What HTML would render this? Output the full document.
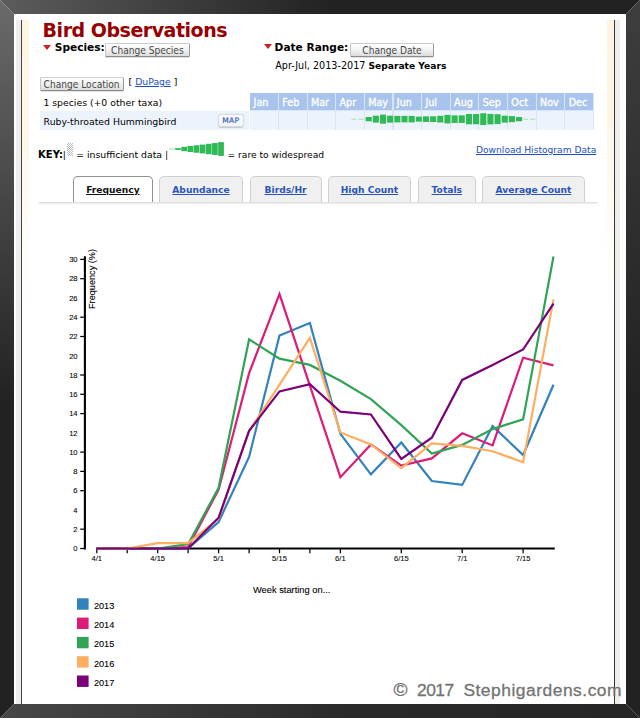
<!DOCTYPE html>
<html lang="en">
<head>
<meta charset="utf-8">
<title>Bird Observations</title>
<style>
html,body{margin:0;padding:0;}
body{width:640px;height:718px;position:relative;overflow:hidden;background:#fff;font-family:"DejaVu Sans","Liberation Sans",sans-serif;color:#000;}
.frame{position:absolute;left:0;top:0;width:640px;height:718px;}
.ft{position:absolute;left:0;top:0;width:640px;height:14px;background:linear-gradient(90deg,#5c5c5c 0,#222 52%,#222 100%);clip-path:polygon(0 0,640px 0,626px 14px,14px 14px);}
.fb{position:absolute;left:0;top:704px;width:640px;height:14px;background:linear-gradient(90deg,#474747 0,#2a2a2a 55%,#262626 100%);clip-path:polygon(14px 0,626px 0,640px 14px,0 14px);}
.fl{position:absolute;left:0;top:0;width:14px;height:718px;background:linear-gradient(180deg,#6a6a6a 0,#222 56%,#222 100%);clip-path:polygon(0 0,14px 14px,14px 704px,0 718px);}
.fr{position:absolute;left:626px;top:0;width:14px;height:718px;background:linear-gradient(180deg,#3e3e3e 0,#222 56%,#222 100%);clip-path:polygon(14px 0,14px 718px,0 704px,0 14px);}
.sl,.sr{position:absolute;top:20px;height:684px;}
.sl{left:16px;width:13px;background:linear-gradient(90deg,#eeeeee 0,#eeeeee 5px,#444 5px,#444 6.2px,transparent 6.2px);}
.sl:before{content:"";position:absolute;left:6.2px;top:0;width:6.8px;height:300px;background:linear-gradient(180deg,#fdf4e2 0,#fdf6e8 35%,#fffdf8 75%,#fff 100%);}
.sr{left:607.5px;width:13px;background:linear-gradient(90deg,transparent 0,transparent 6.3px,#333 6.3px,#333 7.5px,#eeeeee 7.5px,#eeeeee 12.5px,transparent 12.5px);}
.sr:before{content:"";position:absolute;left:-0.8px;top:0;width:7.1px;height:300px;background:linear-gradient(180deg,#fdf4e2 0,#fdf6e8 35%,#fffdf8 75%,#fff 100%);}
.t{position:absolute;white-space:nowrap;line-height:20px;height:20px;}
h1.t{margin:0;font-size:19px;font-weight:bold;color:#990000;left:42.6px;top:17.1px;line-height:26px;height:26px;letter-spacing:-0.48px;transform:scaleY(1.045);transform-origin:0 19.6px;}
.tri{position:absolute;width:0;height:0;border-left:4.1px solid transparent;border-right:4.1px solid transparent;border-top:5.2px solid #cc2222;}
.b1{font-weight:bold;font-size:10.6px;}
.n1{font-size:9.3px;}
.btn{position:absolute;box-sizing:border-box;height:13.8px;border:1px solid #cccccc;border-left-color:#c4c4c4;border-bottom-color:#8c8c8c;border-right-color:#9a9a9a;border-radius:1.5px;background:linear-gradient(180deg,#ffffff 0,#f1f1f1 50%,#dcdcdc 100%);font-family:"DejaVu Sans Condensed","Liberation Sans",sans-serif;font-size:10.1px;line-height:13.8px;text-align:center;color:#484848;white-space:nowrap;box-shadow:0 0.5px 0.5px rgba(0,0,0,.25);}
a{color:#1a4fbf;text-decoration:underline;}
.mh{position:absolute;top:93.4px;height:16.6px;background:#a9c4ec;color:#fff;font-size:9.6px;line-height:19.4px;box-sizing:border-box;padding-left:3.3px;overflow:hidden;-webkit-text-stroke:0.3px #fff;}
.mc{position:absolute;top:110.6px;height:19.1px;background:#edf3fc;}
.rowbg{position:absolute;left:40px;top:110.6px;width:209.4px;height:19.1px;background:#edf3fc;}
.hbg{position:absolute;left:250.3px;top:93.4px;width:343.5px;height:36.3px;background:#d9e5f7;}
.b{position:absolute;width:6.2px;background:#2fba55;display:block;}
.b.t{background:#a6dfb2;}
.map{position:absolute;left:217.6px;top:113.7px;width:26px;height:13.2px;box-sizing:border-box;border:1px solid #d6d9e0;border-radius:3.5px;background:linear-gradient(180deg,#fbfcfe,#f1f4f9);font-size:7.6px;letter-spacing:0.3px;padding-left:0.6px;line-height:12.4px;text-align:center;color:#3f60c0;-webkit-text-stroke:0.2px #3f60c0;box-shadow:0 0.6px 1px rgba(0,0,0,.18);}
.chk{position:absolute;left:67px;top:142.5px;width:6px;height:13px;background-color:#fff;background-image:linear-gradient(45deg,#bbb 25%,transparent 25%,transparent 75%,#bbb 75%),linear-gradient(45deg,#bbb 25%,transparent 25%,transparent 75%,#bbb 75%);background-size:2px 2px;background-position:0 0,1px 1px;}
.tabs{position:absolute;left:38.6px;top:201.5px;width:558px;height:3px;background:linear-gradient(180deg,#d6d6d6 0,#ececec 40%,rgba(255,255,255,0) 100%);}
.tab{position:absolute;top:175.9px;height:26.4px;box-sizing:border-box;border:1px solid #d0d0d0;border-bottom:none;border-radius:5px 5px 0 0;background:#f0f0f0;text-align:center;font-size:9.15px;font-weight:bold;line-height:27px;white-space:nowrap;}
.tab a{color:#2a55b8;}
.tab.on{background:#fff;border-color:#909090;height:26.4px;}
.tab.on a{color:#111;}
.chart{position:absolute;left:0;top:0;}
.chart .hist rect{fill:#2fba55;}
.chart .hist rect.bt{fill:#a6dfb2;}
.chart text{font-family:"Liberation Sans",sans-serif;fill:#000;stroke:#000;stroke-width:0.1px;}
.chart .ticklab text{font-size:7.6px;fill:#000;stroke-width:0.08px;}
.chart .axlab{font-size:9.6px;}
.chart .leg{font-size:9.2px;}
.wm{position:absolute;left:0;top:0;font-family:"Liberation Sans",sans-serif;font-size:17.4px;line-height:24px;color:#737373;white-space:nowrap;-webkit-text-stroke:0.3px #737373;}
.wm span{position:absolute;top:678.2px;}
</style>
</head>
<body>
<div class="sl"></div><div class="sr"></div>

<h1 class="t">Bird Observations</h1>

<div class="tri" style="left:43.4px;top:44.6px"></div>
<span class="t b1" style="left:54.8px;top:37px">Species:</span>
<div class="btn" style="left:105.2px;top:43.3px;width:84.4px">Change Species</div>

<div class="tri" style="left:263.5px;top:44.4px"></div>
<span class="t b1" style="left:274.6px;top:37px">Date Range:</span>
<div class="btn" style="left:349.6px;top:43.3px;width:84.8px">Change Date</div>
<span class="t n1" style="left:275.2px;top:55.5px;font-size:9.65px">Apr-Jul, 2013-2017 <b style="font-size:9.15px">Separate Years</b></span>

<div class="btn" style="left:39.6px;top:77.2px;width:84px">Change Location</div>
<span class="t n1" style="left:128.6px;top:72.2px">[ <a>DuPage</a> ]</span>

<span class="t n1" style="left:43.4px;top:93.3px">1 species (+0 other taxa)</span>
<div class="hbg"></div>
<div class="rowbg"></div>
<div class="mh" style="left:250.30px;width:27.64px">Jan</div>
<div class="mc" style="left:250.30px;width:27.64px"></div>
<div class="mh" style="left:278.94px;width:27.64px">Feb</div>
<div class="mc" style="left:278.94px;width:27.64px"></div>
<div class="mh" style="left:307.58px;width:27.64px">Mar</div>
<div class="mc" style="left:307.58px;width:27.64px"></div>
<div class="mh" style="left:336.22px;width:27.64px">Apr</div>
<div class="mc" style="left:336.22px;width:27.64px"></div>
<div class="mh" style="left:364.86px;width:27.64px">May</div>
<div class="mc" style="left:364.86px;width:27.64px"></div>
<div class="mh" style="left:393.50px;width:27.64px">Jun</div>
<div class="mc" style="left:393.50px;width:27.64px"></div>
<div class="mh" style="left:422.14px;width:27.64px">Jul</div>
<div class="mc" style="left:422.14px;width:27.64px"></div>
<div class="mh" style="left:450.78px;width:27.64px">Aug</div>
<div class="mc" style="left:450.78px;width:27.64px"></div>
<div class="mh" style="left:479.42px;width:27.64px">Sep</div>
<div class="mc" style="left:479.42px;width:27.64px"></div>
<div class="mh" style="left:508.06px;width:27.64px">Oct</div>
<div class="mc" style="left:508.06px;width:27.64px"></div>
<div class="mh" style="left:536.70px;width:27.64px">Nov</div>
<div class="mc" style="left:536.70px;width:27.64px"></div>
<div class="mh" style="left:565.34px;width:27.64px">Dec</div>
<div class="mc" style="left:565.34px;width:27.64px"></div>
<span class="t n1" style="left:43.6px;top:111.9px">Ruby-throated Hummingbird</span>
<div class="map">MAP</div>

<span class="t b1" style="left:38.1px;top:145.2px;font-size:10px">KEY:</span>
<span class="t n1" style="left:62.8px;top:145.2px">|</span>
<div class="chk"></div>
<span class="t n1" style="left:76.2px;top:145.2px">= insufficient data |</span>
<span class="t n1" style="left:227.5px;top:145.2px;font-size:9.15px">= rare to widespread</span>
<span class="t n1" style="left:476px;top:139.6px;font-size:9.15px"><a>Download Histogram Data</a></span>

<div class="tabs"></div>
<div class="tab on" style="left:73px;width:79.8px"><a>Frequency</a></div>
<div class="tab" style="left:159px;width:84px"><a>Abundance</a></div>
<div class="tab" style="left:249.6px;width:72px"><a>Birds/Hr</a></div>
<div class="tab" style="left:327.6px;width:83.6px"><a>High Count</a></div>
<div class="tab" style="left:417.8px;width:58px"><a>Totals</a></div>
<div class="tab" style="left:481.8px;width:103.2px"><a>Average Count</a></div>

<svg class="chart" width="640" height="718" viewBox="0 0 640 718">
<g stroke="#000" stroke-width="2.1" fill="none">
<path d="M84.9,256.2V549.6"/>
</g>
<g stroke="#000" stroke-width="1.25" fill="none">
<line x1="80.2" x2="85" y1="548.5" y2="548.5"/>
<line x1="80.2" x2="85" y1="529.2" y2="529.2"/>
<line x1="80.2" x2="85" y1="490.7" y2="490.7"/>
<line x1="80.2" x2="85" y1="471.4" y2="471.4"/>
<line x1="80.2" x2="85" y1="452.1" y2="452.1"/>
<line x1="80.2" x2="85" y1="413.6" y2="413.6"/>
<line x1="80.2" x2="85" y1="394.3" y2="394.3"/>
<line x1="80.2" x2="85" y1="375.0" y2="375.0"/>
<line x1="80.2" x2="85" y1="336.5" y2="336.5"/>
<line x1="80.2" x2="85" y1="317.2" y2="317.2"/>
<line x1="80.2" x2="85" y1="278.7" y2="278.7"/>
<line x1="80.2" x2="85" y1="259.4" y2="259.4"/>
</g>
<g class="ticklab" text-anchor="end">
<text x="77.6" y="551.2">0</text>
<text x="77.6" y="531.9">2</text>
<text x="77.6" y="512.7">4</text>
<text x="77.6" y="493.4">6</text>
<text x="77.6" y="474.1">8</text>
<text x="77.6" y="454.8">10</text>
<text x="77.6" y="435.6">12</text>
<text x="77.6" y="416.3">14</text>
<text x="77.6" y="397.0">16</text>
<text x="77.6" y="377.7">18</text>
<text x="77.6" y="358.5">20</text>
<text x="77.6" y="339.2">22</text>
<text x="77.6" y="319.9">24</text>
<text x="77.6" y="300.6">26</text>
<text x="77.6" y="281.4">28</text>
<text x="77.6" y="262.1">30</text>
</g>
<path d="M96,548.5H554.8" stroke="#000" stroke-width="2" fill="none"/>
<g stroke="#000" stroke-width="1.25" fill="none">
<line x1="96.8" x2="96.8" y1="548.5" y2="553.3"/>
<line x1="127.2" x2="127.2" y1="548.5" y2="553.3"/>
<line x1="157.7" x2="157.7" y1="548.5" y2="553.3"/>
<line x1="188.1" x2="188.1" y1="548.5" y2="553.3"/>
<line x1="218.6" x2="218.6" y1="548.5" y2="553.3"/>
<line x1="249.1" x2="249.1" y1="548.5" y2="553.3"/>
<line x1="279.5" x2="279.5" y1="548.5" y2="553.3"/>
<line x1="309.9" x2="309.9" y1="548.5" y2="553.3"/>
<line x1="340.4" x2="340.4" y1="548.5" y2="553.3"/>
<line x1="401.3" x2="401.3" y1="548.5" y2="553.3"/>
<line x1="462.2" x2="462.2" y1="548.5" y2="553.3"/>
<line x1="523.1" x2="523.1" y1="548.5" y2="553.3"/>
</g>
<g class="ticklab" text-anchor="middle">
<text x="96.8" y="561.2">4/1</text>
<text x="157.7" y="561.2">4/15</text>
<text x="218.6" y="561.2">5/1</text>
<text x="279.5" y="561.2">5/15</text>
<text x="340.4" y="561.2">6/1</text>
<text x="401.3" y="561.2">6/15</text>
<text x="462.2" y="561.2">7/1</text>
<text x="523.1" y="561.2">7/15</text>
</g>
<text class="axlab" x="253" y="592.6" textLength="77.4" lengthAdjust="spacingAndGlyphs">Week starting on...</text>
<text class="axlab" transform="translate(95.4,249) rotate(-90)" text-anchor="end" textLength="60" lengthAdjust="spacingAndGlyphs">Frequency (%)</text>
<polyline fill="none" stroke="#3182bd" stroke-width="2.2" stroke-linejoin="miter" points="96.8,548.5 127.2,548.5 157.7,548.5 188.1,548.5 218.6,522.0 249.1,456.9 279.5,335.5 309.9,323.0 340.4,433.8 370.9,474.3 401.3,442.5 431.8,481.0 462.2,484.9 492.6,426.1 523.1,455.0 553.5,384.7"/>
<polyline fill="none" stroke="#dd1c77" stroke-width="2.2" stroke-linejoin="miter" points="96.8,548.5 127.2,548.5 157.7,548.5 188.1,547.1 218.6,489.7 249.1,373.1 279.5,294.1 309.9,385.6 340.4,477.2 370.9,444.4 401.3,465.6 431.8,458.4 462.2,433.3 492.6,445.4 523.1,357.7 553.5,365.4"/>
<polyline fill="none" stroke="#31a354" stroke-width="2.2" stroke-linejoin="miter" points="96.8,548.5 127.2,548.5 157.7,548.5 188.1,544.2 218.6,487.8 249.1,339.4 279.5,358.7 309.9,364.9 340.4,380.8 370.9,399.1 401.3,425.1 431.8,453.6 462.2,444.9 492.6,429.0 523.1,419.4 553.5,256.5"/>
<polyline fill="none" stroke="#fdae61" stroke-width="2.2" stroke-linejoin="miter" points="96.8,548.5 127.2,548.5 157.7,543.2 188.1,543.2 218.6,518.6 249.1,430.9 279.5,384.7 309.9,337.9 340.4,432.4 370.9,444.4 401.3,468.0 431.8,443.5 462.2,445.9 492.6,451.2 523.1,462.2 553.5,299.4"/>
<polyline fill="none" stroke="#7a0177" stroke-width="2.2" stroke-linejoin="miter" points="96.8,548.5 127.2,548.5 157.7,548.5 188.1,548.5 218.6,517.7 249.1,430.9 279.5,391.4 309.9,384.2 340.4,411.7 370.9,414.5 401.3,458.9 431.8,437.7 462.2,379.9 492.6,364.9 523.1,349.5 553.5,303.7"/>
<rect x="77" y="598.3" width="11.6" height="11.4" fill="#3182bd"/>
<text class="leg" x="93.9" y="608.8">2013</text>
<rect x="77" y="617.6" width="11.6" height="11.4" fill="#dd1c77"/>
<text class="leg" x="93.9" y="628.1">2014</text>
<rect x="77" y="636.9" width="11.6" height="11.4" fill="#31a354"/>
<text class="leg" x="93.9" y="647.4">2015</text>
<rect x="77" y="656.2" width="11.6" height="11.4" fill="#fdae61"/>
<text class="leg" x="93.9" y="666.7">2016</text>
<rect x="77" y="675.5" width="11.6" height="11.4" fill="#7a0177"/>
<text class="leg" x="93.9" y="686.0">2017</text>
<g class="hist"><rect class="bt" x="351.32" y="118.7" width="5.2" height="1"/>
<rect class="bt" x="358.47" y="118.7" width="5.2" height="1"/>
<rect x="365.66" y="117.00" width="6.1" height="4.30"/>
<rect x="372.81" y="115.70" width="6.1" height="6.90"/>
<rect x="379.96" y="114.60" width="6.1" height="9.10"/>
<rect x="387.11" y="115.65" width="6.1" height="7.00"/>
<rect x="394.30" y="115.90" width="6.1" height="6.50"/>
<rect x="401.45" y="115.90" width="6.1" height="6.50"/>
<rect x="408.60" y="115.90" width="6.1" height="6.50"/>
<rect x="415.75" y="116.65" width="6.1" height="5.00"/>
<rect x="422.94" y="116.30" width="6.1" height="5.70"/>
<rect x="430.09" y="116.30" width="6.1" height="5.70"/>
<rect x="437.24" y="115.80" width="6.1" height="6.70"/>
<rect x="444.39" y="114.90" width="6.1" height="8.50"/>
<rect x="451.58" y="115.35" width="6.1" height="7.60"/>
<rect x="458.73" y="115.35" width="6.1" height="7.60"/>
<rect x="465.88" y="114.00" width="6.1" height="10.30"/>
<rect x="473.03" y="114.00" width="6.1" height="10.30"/>
<rect x="480.22" y="113.25" width="6.1" height="11.80"/>
<rect x="487.37" y="113.90" width="6.1" height="10.50"/>
<rect x="494.52" y="114.20" width="6.1" height="9.90"/>
<rect x="501.67" y="115.70" width="6.1" height="6.90"/>
<rect x="508.86" y="116.10" width="6.1" height="6.10"/>
<rect x="516.01" y="117.00" width="6.1" height="4.30"/>
<rect class="bt" x="523.16" y="118.7" width="5.2" height="1"/>
<rect class="bt" x="530.31" y="118.7" width="5.2" height="1"/>
<rect class="bt" x="169.00" y="148.50" width="5.7" height="1.00"/>
<rect  x="175.15" y="148.10" width="5.7" height="1.80"/>
<rect  x="181.30" y="146.80" width="5.7" height="4.40"/>
<rect  x="187.45" y="146.00" width="5.7" height="6.00"/>
<rect  x="193.60" y="145.25" width="5.7" height="7.50"/>
<rect  x="199.75" y="144.60" width="5.7" height="8.80"/>
<rect  x="205.90" y="143.80" width="5.7" height="10.40"/>
<rect  x="212.05" y="143.05" width="5.7" height="11.90"/>
<rect  x="218.20" y="142.10" width="5.7" height="13.80"/></g>
</svg>

<div class="wm"><span style="left:393.5px;font-size:19px;top:677.6px">©</span> <span style="left:417.1px;letter-spacing:-0.55px">2017</span> <span style="left:463.4px;letter-spacing:0.52px">Stephigardens.com</span></div>

<div class="frame"><div class="ft"></div><div class="fb"></div><div class="fl"></div><div class="fr"></div></div>
</body>
</html>
